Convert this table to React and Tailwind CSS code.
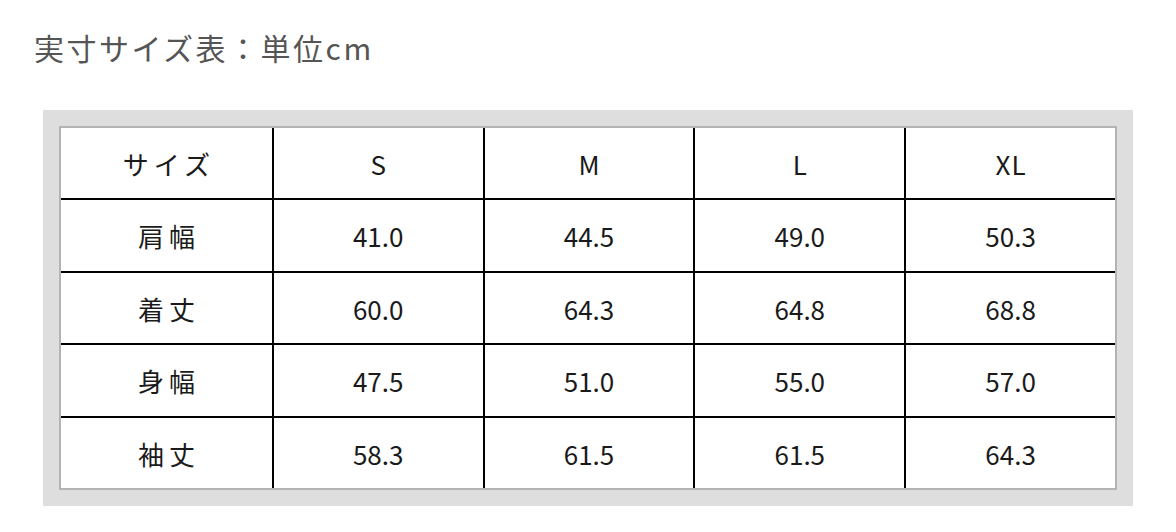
const rows = [
  ['サイズ', 'S', 'M', 'L', 'XL'],
  ['肩幅', '41.0', '44.5', '49.0', '50.3'],
  ['着丈', '60.0', '64.3', '64.8', '68.8'],
  ['身幅', '47.5', '51.0', '55.0', '57.0'],
  ['袖丈', '58.3', '61.5', '61.5', '64.3'],
];

const SizeTable = () => {
  return (
    <div className="w-[1176px] h-[532px] bg-white font-['Noto_Sans_CJK_JP','Noto_Sans',sans-serif]">
      <h2 className="pl-[34px] pt-[26px] h-[110px] text-[30px] leading-[42px] text-[#555] tracking-[2.5px]">
        実寸サイズ表：単位cm
      </h2>
      <div className="ml-[43px] w-[1090px] bg-[#dedede] p-4">
        <div className="h-[364px] border-2 border-[#b4b4b4] bg-white grid grid-rows-[70px_73px_72px_73px_72px]">
          {rows.map((row, i) => (
            <div key={i} className={`grid grid-cols-5 ${i > 0 ? 'border-t-2 border-black' : ''}`}>
              {row.map((cell, j) => (
                <div
                  key={j}
                  className={`flex items-center justify-center text-[26px] text-[#1a1a1a] ${j > 0 ? 'border-l-2 border-black' : ''} ${j === 0 ? 'tracking-[5px] pl-[5px]' : i === 0 ? 'tracking-[1px] pl-[1px]' : ''}`}
                >
                  {cell}
                </div>
              ))}
            </div>
          ))}
        </div>
      </div>
    </div>
  );
};

export default SizeTable;
